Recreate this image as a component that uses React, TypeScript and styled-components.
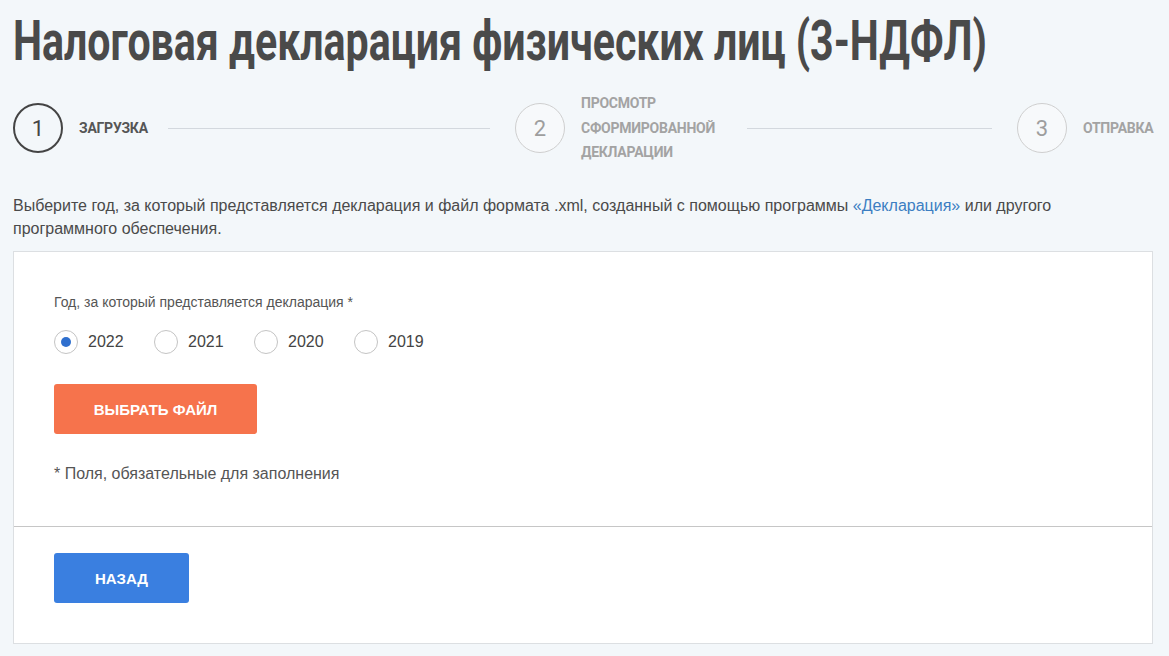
import React, { useState } from "react";
import styled, { createGlobalStyle } from "styled-components";

const Global = createGlobalStyle`
  html, body { margin: 0; padding: 0; background: #f3f7fa; }
  body { font-family: "Liberation Sans", Arial, sans-serif; color: #444; }
  * { box-sizing: border-box; }
`;

const Page = styled.div`
  width: 1169px;
  height: 656px;
  padding: 0 16px 0 13px;
  overflow: hidden;
`;

const Title = styled.h1`
  margin: 0;
  padding-top: 8px;
  height: 86px;
  font-family: Roboto, sans-serif;
  font-weight: 700;
  font-size: 56px;
  line-height: 66px;
  color: #4a4a4a;
  white-space: nowrap;
`;

const TitleText = styled.span`
  display: inline-block;
  transform: scaleX(0.734);
  transform-origin: left center;
`;

const Stepper = styled.div`
  display: grid;
  grid-template-columns: 502px 502px auto;
  align-items: center;
  height: 84px;
`;

const Step = styled.div`
  display: flex;
  align-items: center;
`;

const Circle = styled.div<{ $active?: boolean }>`
  flex: none;
  width: 50px;
  height: 50px;
  border-radius: 50%;
  border: ${(p) => (p.$active ? "2px solid #444" : "1px solid #cfcfcf")};
  background: ${(p) => (p.$active ? "transparent" : "#f7f9fb")};
  display: flex;
  align-items: center;
  justify-content: center;
  font-family: Roboto, sans-serif;
  font-size: 22px;
  color: ${(p) => (p.$active ? "#444" : "#9e9e9e")};
`;

const StepLabel = styled.div<{ $active?: boolean; $w?: number }>`
  flex: none;
  margin-left: 16px;
  font-family: Roboto, sans-serif;
  font-weight: 700;
  font-size: 14px;
  line-height: 24.5px;
  letter-spacing: -0.25px;
  text-transform: uppercase;
  color: ${(p) => (p.$active ? "#555" : "#a3a3a3")};
  width: ${(p) => (p.$w ? `${p.$w}px` : "auto")};
`;

const Line = styled.div`
  flex: 1;
  height: 1px;
  background: #d3d8de;
  margin-left: 20px;
  margin-right: 25px;
`;

const Intro = styled.p`
  margin: 24px 0 11px;
  max-width: 1100px;
  font-size: 16px;
  line-height: 23px;
  color: #4a4a4a;
`;

const Link = styled.a`
  color: #3b7ec2;
  text-decoration: none;
`;

const Card = styled.div`
  width: 1140px;
  background: #fff;
  border: 1px solid #dcdfe2;
`;

const CardTop = styled.div`
  padding: 40px 40px 42px;
  border-bottom: 1px solid #c6c6c6;
`;

const CardBottom = styled.div`
  padding: 26px 40px 40px;
`;

const FieldLabel = styled.div`
  font-size: 14px;
  line-height: 20px;
  color: #555;
`;

const RadioRow = styled.div`
  display: flex;
  margin-top: 18px;
  height: 24px;
`;

const RadioItem = styled.label`
  display: flex;
  align-items: center;
  gap: 10px;
  width: 100px;
  font-size: 16px;
  color: #444;
  cursor: pointer;
`;

const RadioCircle = styled.span<{ $checked?: boolean }>`
  width: 24px;
  height: 24px;
  border-radius: 50%;
  border: 1px solid #c4c4c4;
  display: flex;
  align-items: center;
  justify-content: center;
  &::after {
    content: "";
    width: 10px;
    height: 10px;
    border-radius: 50%;
    background: ${(p) => (p.$checked ? "#2f6fce" : "transparent")};
  }
`;

const Button = styled.button<{ $color: string; $w: number }>`
  display: block;
  width: ${(p) => p.$w}px;
  height: 50px;
  border: none;
  border-radius: 3px;
  background: ${(p) => p.$color};
  color: #fff;
  font-family: "Liberation Sans", Arial, sans-serif;
  font-weight: 700;
  font-size: 15px;
  text-transform: uppercase;
  cursor: pointer;
`;

const FileButton = styled(Button)`
  margin-top: 30px;
`;

const Note = styled.div`
  margin-top: 30px;
  font-size: 16px;
  line-height: 20px;
  color: #555;
`;

const years = ["2022", "2021", "2020", "2019"];

export default function App() {
  const [year, setYear] = useState("2022");
  return (
    <>
      <Global />
      <Page>
        <Title>
          <TitleText>Налоговая декларация физических лиц (3-НДФЛ)</TitleText>
        </Title>
        <Stepper>
          <Step>
            <Circle $active>1</Circle>
            <StepLabel $active>Загрузка</StepLabel>
            <Line />
          </Step>
          <Step>
            <Circle>2</Circle>
            <StepLabel $w={146}>
              Просмотр
              <br />
              сформированной
              <br />
              декларации
            </StepLabel>
            <Line />
          </Step>
          <Step>
            <Circle>3</Circle>
            <StepLabel>Отправка</StepLabel>
          </Step>
        </Stepper>
        <Intro>
          Выберите год, за который представляется декларация и файл формата .xml, созданный с помощью
          программы <Link href="#">«Декларация»</Link> или другого программного обеспечения.
        </Intro>
        <Card>
          <CardTop>
            <FieldLabel>Год, за который представляется декларация *</FieldLabel>
            <RadioRow>
              {years.map((y) => (
                <RadioItem key={y} onClick={() => setYear(y)}>
                  <RadioCircle $checked={year === y} />
                  {y}
                </RadioItem>
              ))}
            </RadioRow>
            <FileButton $color="#f6734c" $w={203}>
              Выбрать файл
            </FileButton>
            <Note>* Поля, обязательные для заполнения</Note>
          </CardTop>
          <CardBottom>
            <Button $color="#3a7fe0" $w={135}>
              Назад
            </Button>
          </CardBottom>
        </Card>
      </Page>
    </>
  );
}
